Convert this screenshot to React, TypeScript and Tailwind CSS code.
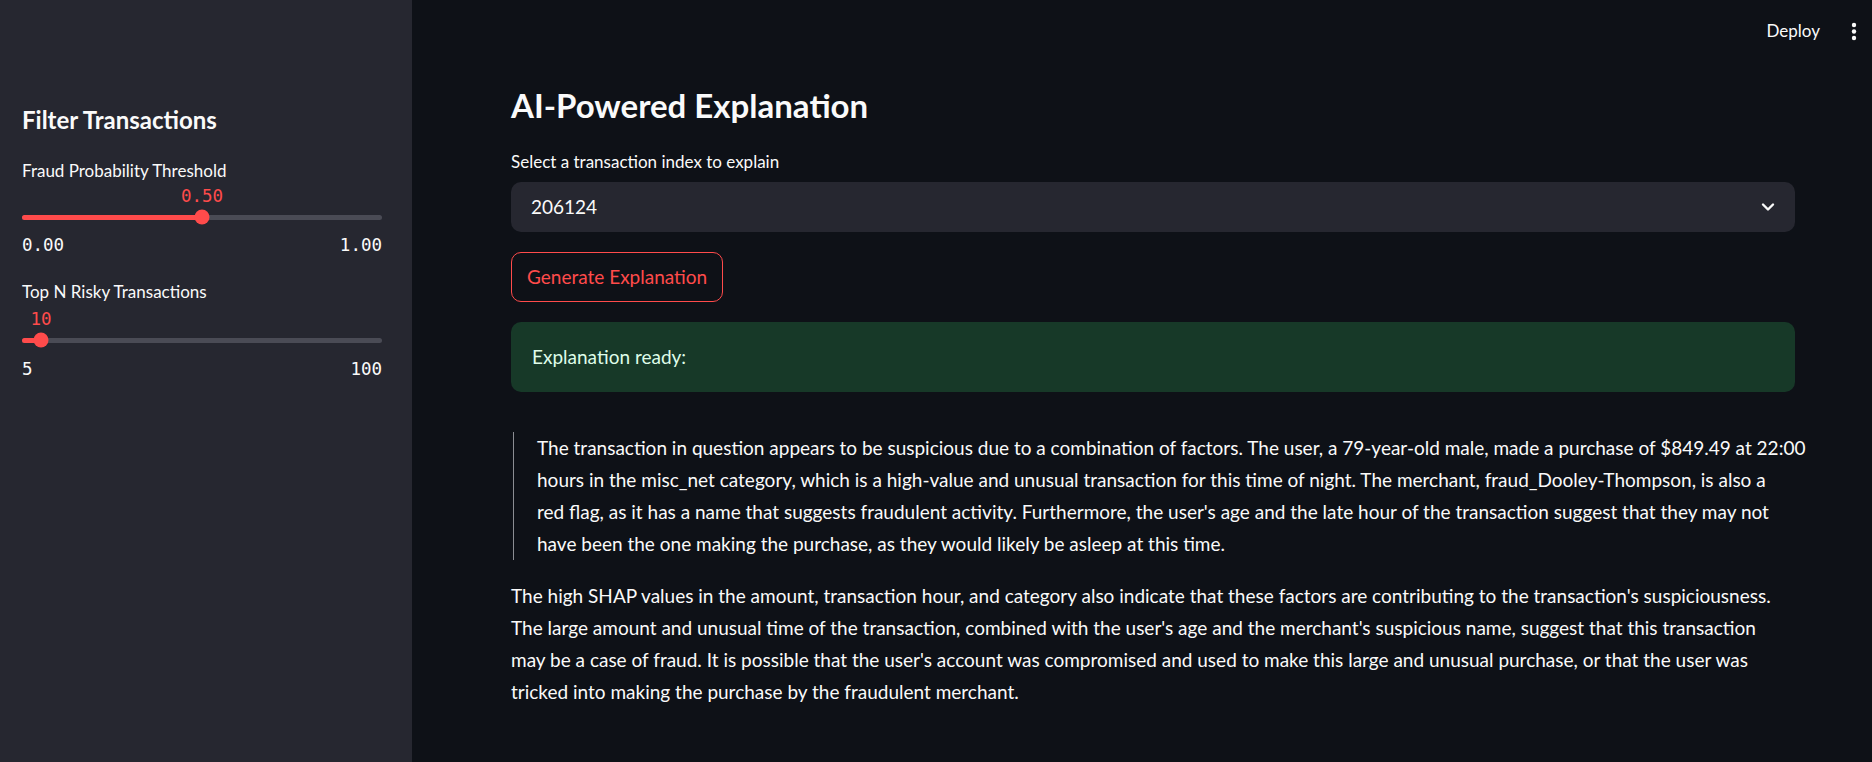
import React from 'react';

const quoteLines = [
  'The transaction in question appears to be suspicious due to a combination of factors. The user, a 79-year-old male, made a purchase of $849.49 at 22:00',
  'hours in the misc_net category, which is a high-value and unusual transaction for this time of night. The merchant, fraud_Dooley-Thompson, is also a',
  "red flag, as it has a name that suggests fraudulent activity. Furthermore, the user's age and the late hour of the transaction suggest that they may not",
  'have been the one making the purchase, as they would likely be asleep at this time.',
];

const bodyLines = [
  "The high SHAP values in the amount, transaction hour, and category also indicate that these factors are contributing to the transaction's suspiciousness.",
  "The large amount and unusual time of the transaction, combined with the user's age and the merchant's suspicious name, suggest that this transaction",
  "may be a case of fraud. It is possible that the user's account was compromised and used to make this large and unusual purchase, or that the user was",
  'tricked into making the purchase by the fraudulent merchant.',
];

const mono = "font-['DejaVu_Sans_Mono',monospace] text-[17.5px] leading-[20px]";

function Slider({
  label,
  value,
  min,
  max,
  display,
  minLabel,
  maxLabel,
  gapTop,
  valueGap,
  rangeGap,
}: {
  label: string;
  value: number;
  min: number;
  max: number;
  display: string;
  minLabel: string;
  maxLabel: string;
  gapTop: string;
  valueGap: string;
  rangeGap: string;
}) {
  const pct = ((value - min) / (max - min)) * 100;
  return (
    <div className={gapTop}>
      <div className="h-[24px] text-[17px] leading-[24px] text-[#fafafa]">{label}</div>
      <div className={`relative h-[20px] ${valueGap}`}>
        <span
          className={`absolute top-0 -translate-x-1/2 text-[#ff4b4b] ${mono}`}
          style={{ left: `${pct}%` }}
        >
          {display}
        </span>
      </div>
      <div className="relative flex h-[22px] items-center">
        <div className="h-[5px] w-full rounded-full bg-[#4a4b55]">
          <div className="h-full rounded-full bg-[#ff4b4b]" style={{ width: `${pct}%` }} />
        </div>
        <div
          className="absolute top-1/2 h-[15px] w-[15px] -translate-x-1/2 -translate-y-1/2 rounded-full bg-[#ff4b4b]"
          style={{ left: `${pct}%` }}
        />
      </div>
      <div className={`flex justify-between text-[#fafafa] ${mono} ${rangeGap}`}>
        <span>{minLabel}</span>
        <span>{maxLabel}</span>
      </div>
    </div>
  );
}

export default function App() {
  return (
    <div className="flex h-[762px] w-full overflow-hidden bg-[#0e1117] font-['Lato',sans-serif] text-[#fafafa]">
      <aside className="w-[412px] shrink-0 bg-[#262730] pl-[22px] pr-[30px] pt-[104px]">
        <h2 className="h-[32px] text-[24px] font-bold leading-[32px]">Filter Transactions</h2>
        <Slider
          label="Fraud Probability Threshold"
          value={0.5}
          min={0}
          max={1}
          display="0.50"
          minLabel="0.00"
          maxLabel="1.00"
          gapTop="mt-[23px]"
          valueGap="mt-[3px]"
          rangeGap="mt-[7px]"
        />
        <Slider
          label="Top N Risky Transactions"
          value={10}
          min={5}
          max={100}
          display="10"
          minLabel="5"
          maxLabel="100"
          gapTop="mt-[25px]"
          valueGap="mt-[5px]"
          rangeGap="mt-[8px]"
        />
      </aside>

      <main className="flex min-w-0 flex-1 flex-col">
        <header className="flex h-[61px] items-start justify-end pr-[15px] pt-[19px]">
          <span className="h-[24px] text-[17px] leading-[24px]">Deploy</span>
          <svg className="ml-[31px] mt-[3px]" width="6" height="20" viewBox="0 0 6 20">
            <circle cx="3" cy="3" r="2.2" fill="#fafafa" />
            <circle cx="3" cy="9.5" r="2.2" fill="#fafafa" />
            <circle cx="3" cy="16" r="2.2" fill="#fafafa" />
          </svg>
        </header>

        <section className="flex flex-col pl-[99px] pr-[77px] pt-[24px]">
          <h1 className="h-[40px] text-[33px] font-bold leading-[40px]">AI-Powered Explanation</h1>

          <label className="mt-[25px] h-[24px] text-[17px] leading-[24px]">
            Select a transaction index to explain
          </label>

          <div className="mt-[8px] flex h-[50px] items-center justify-between rounded-[10px] bg-[#262730] pl-[20px] pr-[20px]">
            <span className="text-[19px] leading-[32px]">206124</span>
            <svg width="14" height="10" viewBox="0 0 14 10" fill="none">
              <path d="M2 2.5l5 5 5-5" stroke="#fafafa" strokeWidth="2.4" strokeLinecap="round" strokeLinejoin="round" />
            </svg>
          </div>

          <div className="mt-[20px]">
            <button className="flex h-[50px] items-center rounded-[10px] border border-[#ff4b4b] bg-transparent px-[15px] text-[19px] leading-[32px] text-[#ff4b4b]">
              Generate Explanation
            </button>
          </div>

          <div className="mt-[20px] rounded-[10px] bg-[#173928] px-[21px] py-[19px] text-[19px] leading-[32px] text-[#dffde9]">
            Explanation ready:
          </div>

          <blockquote className="ml-[2px] mt-[40px] border-l border-[#8b8d93] pl-[23px] text-[19px] leading-[32px]">
            {quoteLines.map((l) => (
              <div key={l} className="whitespace-nowrap">
                {l}
              </div>
            ))}
          </blockquote>

          <div className="mt-[20px] text-[19px] leading-[32px]">
            {bodyLines.map((l) => (
              <div key={l} className="whitespace-nowrap">
                {l}
              </div>
            ))}
          </div>
        </section>
      </main>
    </div>
  );
}
